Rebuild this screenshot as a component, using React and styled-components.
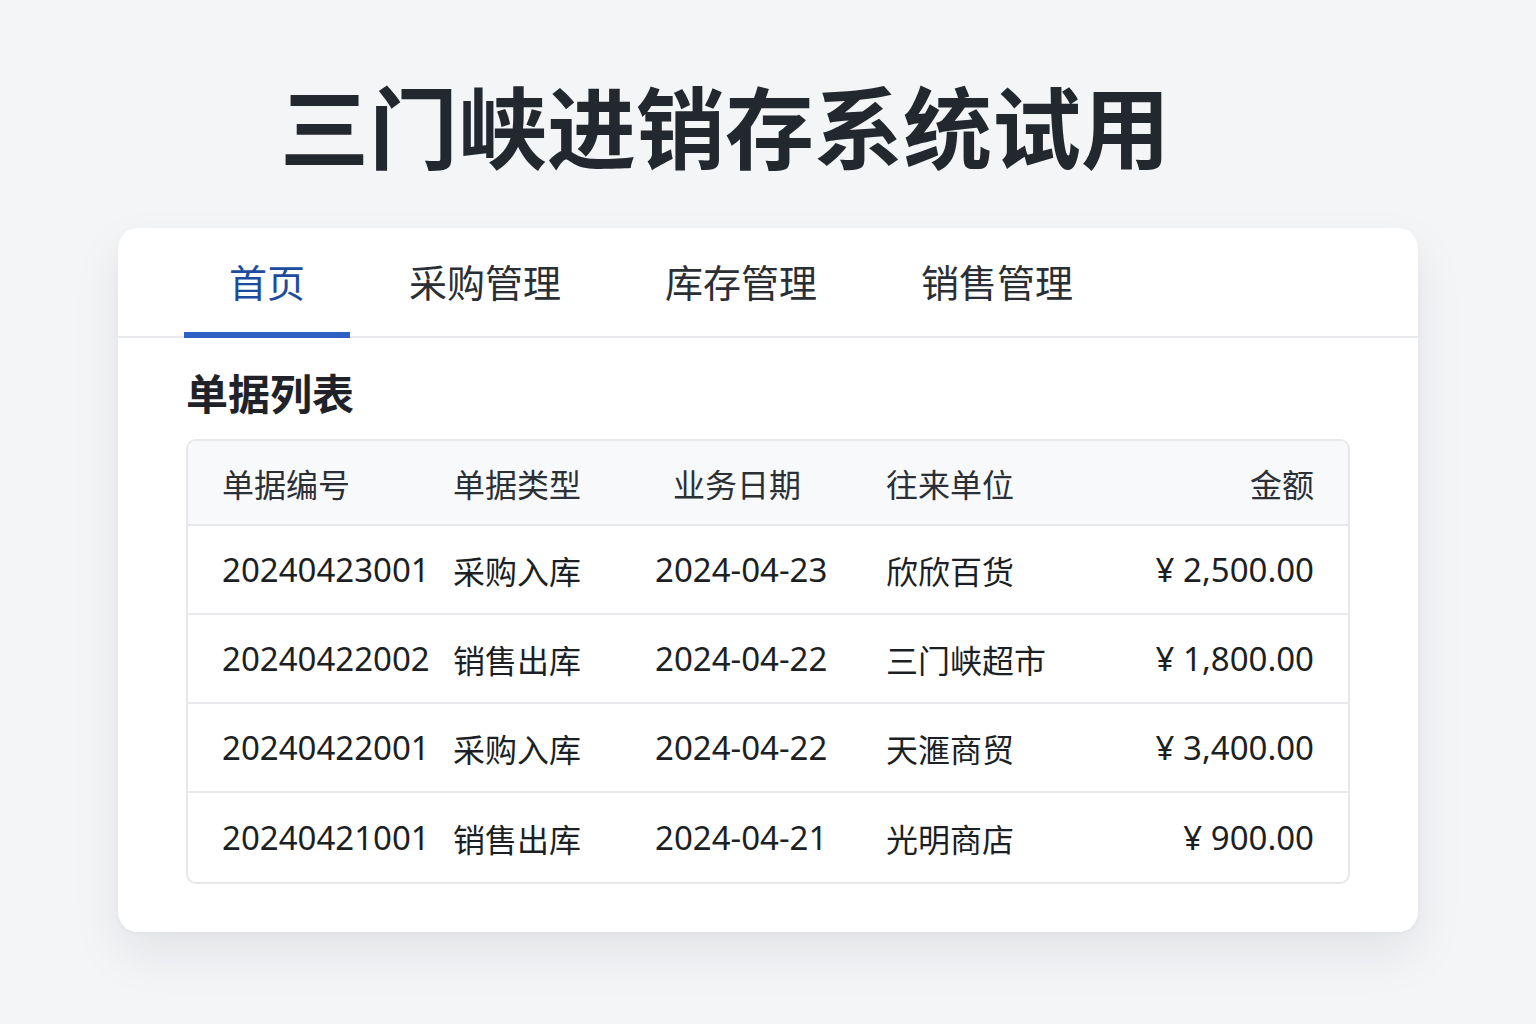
import React from "react";
import styled, { createGlobalStyle } from "styled-components";

const GlobalStyle = createGlobalStyle`
  body {
    margin: 0;
    background: #f4f5f7;
    font-family: "Noto Sans", "Noto Sans CJK SC", sans-serif;
  }
`;

const tabs = ["首页", "采购管理", "库存管理", "销售管理"];

const columns = [
  { label: "单据编号" },
  { label: "单据类型" },
  { label: "业务日期", indent: 18 },
  { label: "往来单位" },
  { label: "金额", right: true },
];

const rows = [
  ["20240423001", "采购入库", "2024-04-23", "欣欣百货", "¥ 2,500.00"],
  ["20240422002", "销售出库", "2024-04-22", "三门峡超市", "¥ 1,800.00"],
  ["20240422001", "采购入库", "2024-04-22", "天滙商贸", "¥ 3,400.00"],
  ["20240421001", "销售出库", "2024-04-21", "光明商店", "¥ 900.00"],
];

export default function App() {
  return (
    <>
      <GlobalStyle />
      <Page>
        <Title>三门峡进销存系统试用</Title>
        <Card>
          <TabBar>
            {tabs.map((t, i) => (
              <Tab key={t} $active={i === 0}>
                {t}
              </Tab>
            ))}
          </TabBar>
          <Body>
            <Heading>单据列表</Heading>
            <Table>
              <HeadRow>
                {columns.map((c) => (
                  <HeadCell key={c.label} $right={c.right} $indent={c.indent}>
                    {c.label}
                  </HeadCell>
                ))}
              </HeadRow>
              {rows.map((r) => (
                <Row key={r[0]}>
                  {r.map((v, i) => (
                    <Cell key={i} $right={columns[i].right}>
                      {v}
                    </Cell>
                  ))}
                </Row>
              ))}
            </Table>
          </Body>
        </Card>
      </Page>
    </>
  );
}

const Page = styled.div`
  min-height: 1024px;
  display: flex;
  flex-direction: column;
  align-items: center;
`;

const Title = styled.h1`
  margin: 79px 0 0;
  padding-right: 86px;
  font-family: "Noto Sans CJK SC", sans-serif;
  font-size: 89px;
  line-height: 90px;
  font-weight: 700;
  color: #23272e;
`;

const Card = styled.div`
  margin-top: 59px;
  width: 1300px;
  height: 704px;
  background: #fff;
  border-radius: 20px;
  box-shadow: 0 22px 50px rgba(20, 24, 32, 0.08), 0 2px 6px rgba(20, 24, 32, 0.03);
  display: flex;
  flex-direction: column;
`;

const TabBar = styled.div`
  display: flex;
  gap: 14px;
  padding: 0 66px;
  height: 108px;
  border-bottom: 2px solid #e8eaed;
`;

const Tab = styled.div`
  position: relative;
  display: flex;
  align-items: center;
  padding: 0 45px 4px;
  font-family: "Noto Sans CJK SC", sans-serif;
  font-size: 38px;
  color: ${(p) => (p.$active ? "#1d4c9e" : "#2a2e35")};

  &::after {
    content: "";
    position: absolute;
    left: 0;
    right: 0;
    bottom: -2px;
    height: 6px;
    background: ${(p) => (p.$active ? "#2d60c2" : "transparent")};
  }
`;

const Body = styled.div`
  padding: 0 68px;
`;

const Heading = styled.h2`
  margin: 32px 0 0;
  font-family: "Noto Sans CJK SC", sans-serif;
  font-size: 42px;
  line-height: 44px;
  font-weight: 700;
  color: #1f2329;
`;

const Table = styled.div`
  margin-top: 25px;
  border: 2px solid #e6e8eb;
  border-radius: 10px;
  overflow: hidden;
`;

const gridCols = `
  display: grid;
  grid-template-columns: 231px 202px 231px 228px 1fr;
  padding: 0 34px 0 34px;
  align-items: center;
  box-sizing: border-box;
`;

const HeadRow = styled.div`
  ${gridCols}
  height: 85px;
  background: #f8f9fa;
  border-bottom: 2px solid #e6e8eb;
`;

const Row = styled.div`
  ${gridCols}
  height: 89px;
  border-bottom: 2px solid #e8eaed;

  &:last-child {
    border-bottom: none;
  }
`;

const HeadCell = styled.div`
  font-family: "Noto Sans CJK SC", sans-serif;
  font-size: 32px;
  color: #2b2f36;
  text-align: ${(p) => (p.$right ? "right" : "left")};
  padding-left: ${(p) => p.$indent || 0}px;
`;

const Cell = styled.div`
  font-family: "Noto Sans", "Noto Sans CJK SC", sans-serif;
  font-size: 33px;
  color: #1c1f24;
  white-space: nowrap;
  text-align: ${(p) => (p.$right ? "right" : "left")};

  &:nth-child(2),
  &:nth-child(4) {
    font-size: 32px;
  }
`;
